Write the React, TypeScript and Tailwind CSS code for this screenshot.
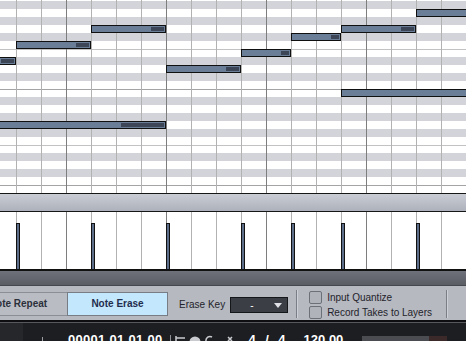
import React from 'react'

// piano roll rows, top to bottom: g = black key stripe, w = white key, e = white key with E/F line, o = white key with octave line
const ROWS = ['g', 'w', 'g', 'w', 'g', 'w', 'e', 'g', 'w', 'g', 'w', 'o', 'g', 'w', 'g', 'w', 'g', 'w', 'e', 'g', 'w', 'g', 'w', 'o']

const LINES = Array.from({ length: 18 }, (_, i) => 16 + i * 25)

interface Note {
  left: number
  width: number
  top: number
  bar?: number
}

const NOTES: Note[] = [
  { left: -1, width: 17, top: 57, bar: 13 },
  { left: 16, width: 75, top: 41, bar: 13 },
  { left: 91, width: 75, top: 25, bar: 13 },
  { left: 166, width: 75, top: 65, bar: 13 },
  { left: -1, width: 167, top: 121, bar: 43 },
  { left: 241, width: 50, top: 49, bar: 8 },
  { left: 291, width: 50, top: 33, bar: 8 },
  { left: 341, width: 75, top: 25, bar: 13 },
  { left: 416, width: 60, top: 9 },
  { left: 341, width: 140, top: 89 },
]

const VELOCITY = [16, 91, 166, 241, 291, 341, 416]

function GridLines() {
  return (
    <div className="absolute inset-0 flex pointer-events-none">
      <div className="w-[16px] shrink-0" />
      {LINES.map((x) => (
        <div
          key={x}
          className={`w-[25px] shrink-0 border-l ${(x - 66) % 100 === 0 ? 'border-[#7e7e7e]' : 'border-[#b2b2b2]'}`}
        />
      ))}
    </div>
  )
}

function PianoRoll() {
  return (
    <div className="relative h-[193px] overflow-hidden bg-white">
      <div className="flex flex-col">
        <div className="h-[1px] bg-white" />
        {ROWS.map((r, i) => (
          <div
            key={i}
            className={`h-[8px] ${r === 'g' ? 'bg-[#d2d4d9]' : 'bg-white'} ${r === 'e' ? 'border-t border-[#c2c2c2]' : ''} ${r === 'o' ? 'border-t border-[#a4a4a4]' : ''}`}
          />
        ))}
      </div>
      <GridLines />
      {NOTES.map((n, i) => (
        <div
          key={i}
          className="absolute h-[8px] border border-[#101010] bg-[#6b7e98]"
          style={{ left: n.left, width: n.width, top: n.top }}
        >
          {n.bar && (
            <div className="absolute top-[1px] right-[1px] h-[4px] bg-[#3d4656]" style={{ width: n.bar }} />
          )}
        </div>
      ))}
    </div>
  )
}

function VelocityLane() {
  return (
    <div className="relative h-[57px] bg-white">
      <GridLines />
      {VELOCITY.map((x) => (
        <div
          key={x}
          className="absolute bottom-0 top-[11px] w-[4px] border border-b-0 border-[#111] bg-[#5c6e89]"
          style={{ left: x }}
        />
      ))}
    </div>
  )
}

function Toolbar() {
  return (
    <div className="flex h-[34px] items-center bg-[#b6b9c0] text-[10px] text-[#1f232b]">
      <div className="-ml-[32px] mt-[1px] flex h-[24px] w-[100px] shrink-0 items-center justify-center border border-[#8a8e96] bg-[#b9bcc3] font-bold text-[#2b303a]">
        Note Repeat
      </div>
      <div className="-ml-[1px] mt-[1px] flex h-[24px] w-[101px] shrink-0 items-center justify-center border border-[#777c85] bg-[#c3e7fc] font-bold text-[#1f2d4e]">
        Note Erase
      </div>
      <span className="ml-[11px] mt-[2px] shrink-0">Erase Key</span>
      <div className="ml-[5px] mt-[4px] flex h-[16px] w-[58px] shrink-0 items-center border border-[#15161a] bg-[#3b3e45] pl-[19px] pr-[5px] text-white">
        <span className="flex-1">-</span>
        <svg width="8" height="5" viewBox="0 0 8 5">
          <path d="M0 0h8L4 5z" fill="#dfe1e6" />
        </svg>
      </div>
      <div className="ml-[8px] mt-[2px] flex h-[28px] shrink-0">
        <div className="w-[1px] bg-[#7a7e86]" />
        <div className="w-[1px] bg-[#cdd0d6]" />
      </div>
      <div className="ml-[11px] mt-[3px] flex shrink-0 flex-col gap-[2px]">
        <div className="flex items-center gap-[5px]">
          <div className="h-[13px] w-[13px] rounded-[2px] border border-[#6c7078] bg-[#b0b3ba]" />
          <span className="leading-[13px]">Input Quantize</span>
        </div>
        <div className="flex items-center gap-[5px]">
          <div className="h-[13px] w-[13px] rounded-[2px] border border-[#6c7078] bg-[#b0b3ba]" />
          <span className="leading-[13px]">Record Takes to Layers</span>
        </div>
      </div>
      <div className="ml-auto mr-[18px] mt-[2px] flex h-[28px] shrink-0">
        <div className="w-[1px] bg-[#7a7e86]" />
        <div className="w-[1px] bg-[#cdd0d6]" />
      </div>
    </div>
  )
}

function Transport() {
  return (
    <div className="flex h-[18px] items-start overflow-hidden bg-[#1d1e21] text-white">
      <div className="h-full w-[23px] shrink-0 bg-[#26272b]" />
      <div className="ml-[19px] mt-[14px] h-[4px] w-[1px] shrink-0 bg-[#9a9ca2]" />
      <span className="ml-[25px] mt-[10px] shrink-0 text-[13px] font-bold leading-[13px] tracking-[0.3px]">00001.01.01.00</span>
      <div className="ml-[7px] mt-[12px] h-[6px] w-[1px] shrink-0 bg-[#8d9096]" />
      <svg className="ml-[4px] mt-[12px] shrink-0" width="64" height="6" viewBox="0 0 64 6">
        <path d="M1 1v6M1 3h9" stroke="#c8cacf" strokeWidth="1.5" fill="none" />
        <circle cx="20" cy="7" r="5.5" fill="#c8cacf" />
        <path d="M31 6a4 4 0 0 1 6-4" stroke="#c8cacf" strokeWidth="1.5" fill="none" />
        <path d="M53 2l4 4M57 2l-4 4" stroke="#c8cacf" strokeWidth="1.5" fill="none" />
      </svg>
      <div className="ml-[10px] mt-[10px] flex w-[37px] shrink-0 justify-between text-[13px] font-bold leading-[13px]">
        <span>4</span>
        <span>/</span>
        <span>4</span>
      </div>
      <span className="ml-[18px] mt-[10px] shrink-0 text-[13px] font-bold leading-[13px]">120.00</span>
      <div className="ml-[19px] mt-[13px] h-[5px] w-[67px] shrink-0 bg-[#4b4c51]" />
      <div className="mt-[13px] h-[5px] w-[18px] shrink-0 bg-[#3c2a2b]" />
    </div>
  )
}

export default function App() {
  return (
    <div className="flex h-[341px] w-[466px] flex-col overflow-hidden bg-[#1d1e21] font-['Liberation_Sans',Arial,sans-serif]">
      <PianoRoll />
      <div className="h-[1px] bg-[#161616]" />
      <div className="h-[17px] bg-gradient-to-b from-[#cacdd4] to-[#adb1bb]" />
      <div className="h-[1px] bg-[#161616]" />
      <VelocityLane />
      <div className="h-[2px] bg-[#111]" />
      <div className="h-[14px] bg-gradient-to-b from-[#6f727a] to-[#5a5d64]" />
      <div className="h-[1px] bg-[#45474c]" />
      <Toolbar />
      <div className="h-[2px] bg-[#0e0e10]" />
      <div className="h-[1px] bg-[#56585d]" />
      <Transport />
    </div>
  )
}
